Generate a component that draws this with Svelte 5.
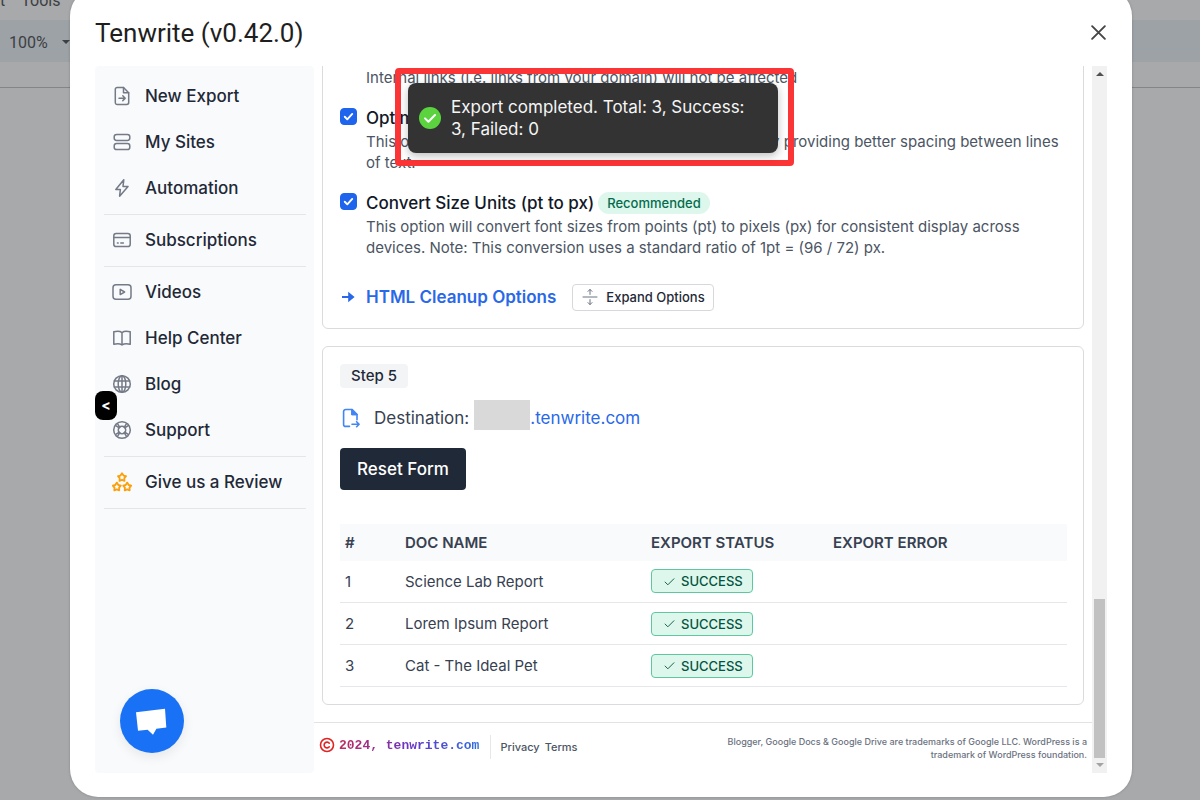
<script lang="ts">
  interface NavItem {
    label: string;
    icon: string;
  }

  interface ExportRow {
    id: number;
    name: string;
    status: string;
    error: string;
  }

  const navGroups: NavItem[][] = [
    [
      { label: "New Export", icon: "export" },
      { label: "My Sites", icon: "sites" },
      { label: "Automation", icon: "bolt" },
    ],
    [{ label: "Subscriptions", icon: "card" }],
    [
      { label: "Videos", icon: "video" },
      { label: "Help Center", icon: "book" },
      { label: "Blog", icon: "globe" },
      { label: "Support", icon: "support" },
    ],
    [{ label: "Give us a Review", icon: "stars" }],
  ];

  const rows: ExportRow[] = [
    { id: 1, name: "Science Lab Report", status: "SUCCESS", error: "" },
    { id: 2, name: "Lorem Ipsum Report", status: "SUCCESS", error: "" },
    { id: 3, name: "Cat - The Ideal Pet", status: "SUCCESS", error: "" },
  ];

  const star = "M0 -4 L1.5 -1.6 L4 -1 L2.3 1 L2.5 3.7 L0 2.7 L-2.5 3.7 L-2.3 1 L-4 -1 L-1.5 -1.6 Z";

  let optimize = $state(true);
  let convertUnits = $state(true);
</script>

{#snippet navIcon(name: string)}
  <svg class="nav-icon" class:review={name === "stars"} viewBox="0 0 20 20" aria-hidden="true">
    {#if name === "export"}
      <path d="M11.5 1.5H5.2A1.9 1.9 0 0 0 3.3 3.4v13.2a1.9 1.9 0 0 0 1.9 1.9h9.6a1.9 1.9 0 0 0 1.9-1.9V6.7z" />
      <path d="M11.5 1.5v5.2h5.2" />
      <path d="M7 12.2h6M10.8 9.8l2.4 2.4-2.4 2.4" />
    {:else if name === "sites"}
      <rect x="2.2" y="2.4" width="15.6" height="6" rx="2.4" />
      <rect x="2.2" y="11.6" width="15.6" height="6" rx="2.4" />
    {:else if name === "bolt"}
      <path d="M11.8 1.8 3.8 11.4h4.6l-.8 6.8 8.400-9.800h-5z" />
    {:else if name === "card"}
      <rect x="1.8" y="3.4" width="16.4" height="13.2" rx="2.4" />
      <path d="M1.8 7.6h16.4M5.4 13h.8M8.8 13h2.6" />
    {:else if name === "video"}
      <rect x="1" y="2.8" width="18" height="14.4" rx="3" />
      <path d="M8.2 7.4v5.2l4.4-2.6z" />
    {:else if name === "book"}
      <path d="M10 4.6C8 3 5 3 1.8 3.8v12.4c3.2-.8 6.2-.8 8.2.8 2-1.6 5-1.6 8.2-.8V3.8C15 3 12 3 10 4.6zM10 4.6V17" />
    {:else if name === "globe"}
      <circle cx="10" cy="10" r="8.3" />
      <ellipse cx="10" cy="10" rx="3.8" ry="8.3" />
      <path d="M2.3 7h15.4M2.3 13h15.4M10 1.7v16.6" />
    {:else if name === "support"}
      <circle cx="10" cy="10" r="8.3" />
      <circle cx="10" cy="10" r="3.7" />
      <path d="M4.1 5.8l3.2 2.1M5.8 4.1l2.1 3.2M14.2 4.1l-2.1 3.2M15.9 5.8l-3.2 2.1M4.1 14.2l3.2-2.1M5.8 15.9l2.1-3.2M14.2 15.9l-2.1-3.2M15.9 14.2l-3.2-2.1" />
    {:else}
      <path d={star} transform="translate(10 5.2)" />
      <path d={star} transform="translate(4.8 14.6)" />
      <path d={star} transform="translate(15.2 14.6)" />
    {/if}
  </svg>
{/snippet}

<div class="app">
  <div class="document" aria-hidden="true">
    <div class="menubar"><span>t</span><span>Tools</span></div>
    <div class="toolbar">
      <span>100%</span>
      <span class="caret"></span>
    </div>
    <div class="ruler"></div>
  </div>

  <div class="overlay">
    <div class="dialog" role="dialog" aria-labelledby="dialog-title">
      <header class="dialog-header">
        <h1 id="dialog-title">Tenwrite (v0.42.0)</h1>
        <button class="close" type="button" aria-label="Close">
          <svg viewBox="0 0 16 16" aria-hidden="true"><path d="M1.2 1.2l13.6 13.6M14.8 1.2L1.2 14.8" /></svg>
        </button>
      </header>

      <div class="body">
        <nav class="sidebar">
          {#each navGroups as group}
            <ul>
              {#each group as item}
                <li>
                  <a href="#{item.icon}">{@render navIcon(item.icon)}{item.label}</a>
                </li>
              {/each}
            </ul>
          {/each}
          <button class="collapse" type="button" aria-label="Collapse menu">&lt;</button>
          <button class="chat" type="button" aria-label="Open chat">
            <svg viewBox="0 0 64 64" aria-hidden="true">
              <path d="M16 23.2 45 19.8 46.3 38.6 36.4 39.7 33 45.8 27.6 40.7 18 41.8z" />
            </svg>
          </button>
        </nav>

        <main>
          <section class="card">
            <p class="note">Internal links (i.e. links from your domain) will not be affected</p>

            <div class="option">
              <input id="optimize" type="checkbox" bind:checked={optimize} />
              <div>
                <div class="option-title">
                  <label for="optimize">Optimize Line Height</label>
                </div>
                <p>This option will optimize the line height of your content, by providing better spacing between lines of text.</p>
              </div>
            </div>

            <div class="option">
              <input id="convert" type="checkbox" bind:checked={convertUnits} />
              <div>
                <div class="option-title">
                  <label for="convert">Convert Size Units (pt to px)</label>
                  <span class="badge">Recommended</span>
                </div>
                <p>This option will convert font sizes from points (pt) to pixels (px) for consistent display across devices. Note: This conversion uses a standard ratio of 1pt = (96 / 72) px.</p>
              </div>
            </div>

            <div class="cleanup">
              <svg class="arrow" viewBox="0 0 16 16" aria-hidden="true">
                <path d="M2 7.1h6.2V2.8L14.6 8l-6.400 5.200V8.900H2z" />
              </svg>
              <h2>HTML Cleanup Options</h2>
              <button class="expand" type="button">
                <svg viewBox="0 0 16 16" aria-hidden="true">
                  <path d="M1 8h14M8 5.400V.6M6 2.400 8 .4l2 2M8 10.600v4.800M6 13.600l2 2 2-2" />
                </svg>
                Expand Options
              </button>
            </div>
          </section>

          <section class="card">
            <span class="step">Step 5</span>
            <div class="destination">
              <svg viewBox="0 0 20 20" aria-hidden="true">
                <path class="fold" d="M11 1.5v5h5z" />
                <path d="M8.5 18.4H4.6a2 2 0 0 1-2-2V3.5a2 2 0 0 1 2-2H11l5 5v5.3M11 1.5v5h5" />
                <path d="M11 16.2h7M15.6 13.7l2.5 2.5-2.5 2.5" />
              </svg>
              <span>Destination:</span>
              <span class="redacted"></span>
              <a href="#destination">.tenwrite.com</a>
            </div>
            <button class="reset" type="button">Reset Form</button>

            <table>
              <thead>
                <tr>
                  <th class="col-id">#</th>
                  <th class="col-name">DOC NAME</th>
                  <th class="col-status">EXPORT STATUS</th>
                  <th>EXPORT ERROR</th>
                </tr>
              </thead>
              <tbody>
                {#each rows as row (row.id)}
                  <tr>
                    <td>{row.id}</td>
                    <td>{row.name}</td>
                    <td>
                      <span class="status">
                        <svg viewBox="0 0 12 12" aria-hidden="true"><path d="M1.2 6.600l3 3L10.800 3" /></svg>
                        {row.status}
                      </span>
                    </td>
                    <td>{row.error}</td>
                  </tr>
                {/each}
              </tbody>
            </table>
          </section>

          <footer>
            <svg class="copyright" viewBox="0 0 16 16" aria-hidden="true">
              <circle cx="8" cy="8" r="6.5" />
              <path d="M10.3 6.2a2.9 2.9 0 1 0 0 3.6" />
            </svg>
            <a class="brand" href="#home">2024, tenwrite.com</a>
            <div class="legal">
              <a href="#privacy">Privacy</a>
              <a href="#terms">Terms</a>
            </div>
            <p>Blogger, Google Docs &amp; Google Drive are trademarks of Google LLC. WordPress is a trademark of WordPress foundation.</p>
          </footer>
        </main>

        <div class="scrollbar" aria-hidden="true">
          <span class="up"></span>
          <span class="thumb"></span>
          <span class="down"></span>
        </div>

        <div class="toast-layer">
          <div class="highlight">
            <div class="toast" role="status">
              <svg viewBox="0 0 22 22" aria-hidden="true">
                <circle cx="11" cy="11" r="11" />
                <path d="M6 11.4l3.4 3.4 6.6-6.8" />
              </svg>
              <span>Export completed. Total: 3, Success: 3, Failed: 0</span>
            </div>
          </div>
        </div>
      </div>
    </div>
  </div>
</div>

<style>
  :global(body) {
    margin: 0;
    font-family: Inter, "Liberation Sans", sans-serif;
    color: #374151;
  }

  * {
    box-sizing: border-box;
  }

  h1,
  h2,
  p,
  ul {
    margin: 0;
    padding: 0;
  }

  a {
    color: inherit;
    text-decoration: none;
  }

  button {
    font-family: inherit;
    cursor: pointer;
  }

  svg {
    flex: none;
    fill: none;
    stroke: currentColor;
    stroke-linecap: round;
    stroke-linejoin: round;
  }

  .app {
    position: relative;
    height: 100vh;
    overflow: hidden;
    background: #a7a9aa;
  }

  /* Dimmed editor behind the dialog */
  .document {
    font-family: Roboto, sans-serif;
    font-size: 16px;
    color: #3c3f43;
  }

  .menubar {
    display: flex;
    align-items: center;
    gap: 16px;
    height: 20px;
    padding-bottom: 18px;
    line-height: 2px;
  }

  .toolbar {
    display: flex;
    align-items: center;
    gap: 14px;
    height: 42px;
    padding: 2px 0 0 9px;
    background: #9da2a7;
  }

  .caret {
    border: 4px solid transparent;
    border-top-color: #3c3f43;
    border-bottom: 0;
  }

  .ruler {
    height: 26px;
    border-bottom: 1px solid #838587;
  }

  .overlay {
    position: absolute;
    inset: -12px 0 0;
    display: flex;
    padding: 0 68px 3px 70px;
  }

  .dialog {
    flex: 1;
    display: flex;
    flex-direction: column;
    min-width: 0;
    padding: 12px 25px 24px;
    border-radius: 28px;
    background: #fff;
    box-shadow: 0 0 3px rgba(0, 0, 0, 0.2);
  }

  .dialog-header {
    display: flex;
    align-items: center;
    justify-content: space-between;
    height: 66px;
  }

  h1 {
    font-family: Roboto, sans-serif;
    font-size: 26px;
    font-weight: 400;
    line-height: 32px;
    color: #1f1f1f;
  }

  .close {
    display: flex;
    padding: 0 0 2px;
    border: 0;
    margin-right: 1px;
    background: none;
    color: #444746;
  }

  .close svg {
    width: 15px;
    height: 15px;
    stroke-width: 2;
  }

  .body {
    position: relative;
    flex: 1;
    display: flex;
    min-height: 0;
  }

  .sidebar {
    position: relative;
    flex: none;
    width: 219px;
    padding: 5px 8px 0 9px;
    border-radius: 4px;
    background: #f9fafc;
  }

  .sidebar ul {
    padding: 2px 0 3px;
    border-bottom: 1px solid #e3e6ea;
    list-style: none;
  }

  .sidebar a {
    display: flex;
    align-items: center;
    gap: 13px;
    height: 46px;
    padding-left: 8px;
    font-size: 17px;
    font-weight: 500;
    color: #1f2937;
  }

  .nav-icon {
    width: 20px;
    height: 20px;
    stroke-width: 1.5;
    color: #747a86;
  }

  .nav-icon.review {
    color: #fb9f0a;
    stroke-width: 1.8;
  }

  .collapse {
    position: absolute;
    top: 325px;
    left: 0;
    width: 22px;
    height: 29px;
    padding: 0 0 2px;
    border: 0;
    border-radius: 8px;
    background: #000;
    color: #fff;
    font-size: 14px;
    font-weight: 700;
  }

  .chat {
    position: absolute;
    bottom: 20px;
    left: 25px;
    width: 64px;
    height: 64px;
    padding: 0;
    border: 0;
    border-radius: 50%;
    background: #1972f5;
    box-shadow: 0 4px 12px rgba(0, 0, 0, 0.08);
  }

  .chat svg {
    display: block;
    fill: #fff;
    stroke: none;
  }

  /* Scrolled to the end, so the content hangs from the bottom edge */
  main {
    flex: 1;
    display: flex;
    flex-direction: column;
    justify-content: flex-end;
    gap: 17px;
    min-width: 0;
    overflow: hidden;
  }

  .card {
    flex: none;
    margin: 0 8px;
    padding: 17px 16px 17px 17px;
    border: 1px solid #d9dbde;
    border-radius: 6px;
  }

  .note,
  .option p {
    font-size: 15px;
    line-height: 21px;
    color: #4b5563;
  }

  .note {
    padding-left: 26px;
    margin-bottom: 18px;
  }

  .option {
    display: flex;
    gap: 9px;
    margin-bottom: 18px;
  }

  .option-title {
    display: flex;
    align-items: center;
    gap: 4px;
    height: 25px;
    color: #111827;
    font-size: 17px;
    font-weight: 500;
    line-height: 24px;
  }

  input {
    appearance: none;
    flex: none;
    width: 17px;
    height: 17px;
    margin: 2px 0 0;
    border: 1px solid #d1d5db;
    border-radius: 4px;
  }

  input:checked {
    border-color: #1f64ec;
    background: #1f64ec
      url("data:image/svg+xml,%3Csvg xmlns='http://www.w3.org/2000/svg' viewBox='0 0 16 16'%3E%3Cpath d='M4 8.3l2.7 2.7L12 5.3' fill='none' stroke='white' stroke-width='2' stroke-linecap='round' stroke-linejoin='round'/%3E%3C/svg%3E");
  }

  .badge {
    padding: 0 9px;
    border-radius: 11px;
    background: #def7ec;
    color: #046c4e;
    font-size: 13px;
    font-weight: 500;
    line-height: 22px;
  }

  .cleanup {
    display: flex;
    align-items: center;
    margin-top: 26px;
    color: #2968e8;
  }

  .arrow {
    width: 16px;
    height: 16px;
    margin-right: 10px;
    fill: currentColor;
    stroke: none;
  }

  h2 {
    font-size: 17px;
    font-weight: 600;
    line-height: 24px;
  }

  .expand {
    display: flex;
    align-items: center;
    gap: 8px;
    height: 27px;
    padding: 0 8px 0 9px;
    margin-left: 16px;
    border: 1px solid #d5d8dc;
    border-radius: 4px;
    background: #fff;
    color: #1f2937;
    font-size: 13px;
    font-weight: 500;
  }

  .expand svg {
    width: 16px;
    height: 16px;
    color: #6b7280;
  }

  .step {
    display: inline-block;
    padding: 0 11px;
    border-radius: 4px;
    background: #f3f4f6;
    color: #1f2937;
    font-size: 15px;
    font-weight: 500;
    line-height: 24px;
    vertical-align: top;
  }

  .destination {
    display: flex;
    align-items: center;
    height: 24px;
    margin: 18px 0;
    font-size: 17px;
    color: #374151;
  }

  .destination svg {
    width: 20px;
    height: 20px;
    margin: 0 13px 0 1px;
    stroke-width: 1.6;
    color: #4285f4;
  }

  .destination .fold {
    fill: currentColor;
  }

  .redacted {
    align-self: flex-end;
    width: 56px;
    height: 30px;
    margin-left: 5px;
    background: #d9d9d9;
  }

  .destination a {
    color: #2968e8;
  }

  .reset {
    display: block;
    height: 42px;
    padding: 0 17px;
    border: 0;
    border-radius: 4px;
    background: #1f2937;
    color: #fff;
    font-size: 17px;
    font-weight: 500;
  }

  table {
    width: 100%;
    margin-top: 34px;
    border-collapse: collapse;
    table-layout: fixed;
    font-size: 15px;
    text-align: left;
  }

  th {
    height: 37px;
    padding: 0 5px;
    background: #f9fafb;
    font-weight: 600;
  }

  td {
    height: 42px;
    padding: 0 5px;
    border-bottom: 1px solid #e5e7eb;
  }

  .col-id {
    width: 60px;
  }

  .col-name {
    width: 246px;
  }

  .col-status {
    width: 182px;
  }

  .status {
    display: inline-flex;
    align-items: center;
    gap: 6px;
    height: 24px;
    padding: 0 9px 0 12px;
    border: 1px solid #5fc7a0;
    border-radius: 4px;
    background: #def7ec;
    color: #03543f;
    font-size: 13px;
    font-weight: 500;
    vertical-align: middle;
  }

  .status svg {
    width: 11px;
    height: 11px;
  }

  footer {
    flex: none;
    display: flex;
    align-items: flex-start;
    height: 51px;
    padding: 12px 5px 0;
    border-top: 1px solid #e0e2e5;
  }

  .copyright {
    width: 16px;
    height: 20px;
    margin-right: 4px;
    stroke-width: 1.6;
    color: #e02424;
  }

  .brand {
    background: linear-gradient(90deg, #c02a5c, #6b35c4 50%, #2f6fe0);
    background-clip: text;
    color: transparent;
    font-family: "Liberation Mono", monospace;
    font-size: 13px;
    font-weight: 700;
    line-height: 21px;
  }

  .legal {
    display: flex;
    gap: 5px;
    padding-left: 9px;
    margin-left: 11px;
    border-left: 1px solid #e5e7eb;
    color: #4b5563;
    font-size: 11px;
    font-weight: 500;
    line-height: 24px;
  }

  footer p {
    width: 380px;
    margin-left: auto;
    color: #6b7280;
    font-size: 9px;
    font-weight: 500;
    line-height: 13px;
    text-align: right;
  }

  .scrollbar {
    flex: none;
    display: flex;
    flex-direction: column;
    align-items: center;
    width: 15px;
    padding: 6px 0;
    background: #f1f1f1;
  }

  .up,
  .down {
    border: 4px solid transparent;
  }

  .up {
    border-top: 0;
    border-bottom-color: #505050;
    margin-bottom: auto;
  }

  .down {
    border-top-color: #a3a3a3;
    border-bottom: 0;
    margin-top: 5px;
  }

  .thumb {
    width: 11px;
    height: 159px;
    background: #c1c1c1;
  }

  .toast-layer {
    position: absolute;
    top: 2px;
    right: 13px;
    left: 0;
    display: flex;
    justify-content: center;
    pointer-events: none;
  }

  .highlight {
    padding: 9px 10px 7px 7px;
    border: 6px solid #fb3436;
    border-radius: 4px;
  }

  .toast {
    display: flex;
    align-items: center;
    gap: 10px;
    width: 370px;
    height: 70px;
    padding: 0 20px 0 11px;
    border-radius: 8px;
    background: #333;
    box-shadow: 0 3px 8px rgba(0, 0, 0, 0.25);
    color: #f5f5f5;
    font-size: 17px;
    line-height: 22px;
  }

  .toast svg {
    width: 22px;
    height: 22px;
    stroke: #fff;
    stroke-width: 2;
  }

  .toast circle {
    fill: #5bd33f;
    stroke: none;
  }
</style>
